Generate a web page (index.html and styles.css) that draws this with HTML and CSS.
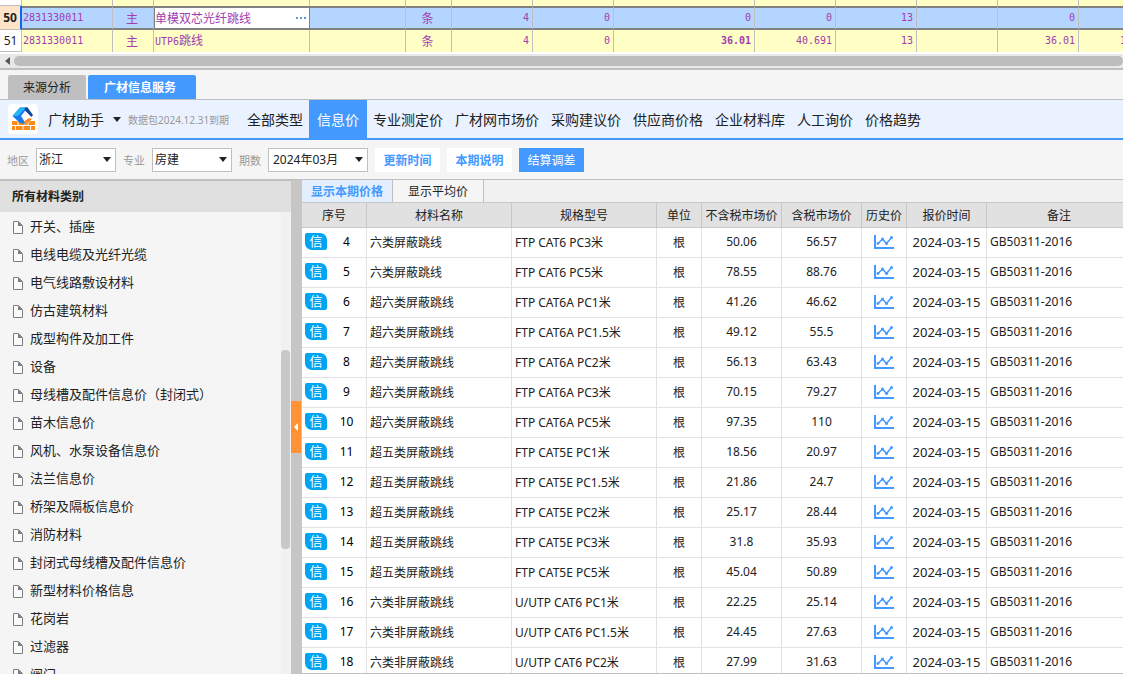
FILE: index.html
```
<!DOCTYPE html>
<html lang="zh-CN">
<head>
  <meta charset="UTF-8">
  <meta name="viewport" content="width=device-width, initial-scale=1.0">
  <title>广材助手 - 信息价</title>
  <link rel="stylesheet" href="styles.css">
</head>
<body>
  <svg class="symbols" aria-hidden="true">
    <symbol id="icon-file" viewBox="0 0 11 13">
      <path d="M1.500 .5h5L10.500 4.500v8h-9z" fill="#fafafa" stroke="#7d7d7d"/>
      <path d="M6 .5v4.500h4.500z" fill="#7d7d7d"/>
    </symbol>
    <symbol id="icon-trend" viewBox="0 0 20 14">
      <path d="M1 0v13h19" fill="none" stroke="#4499ff" stroke-width="2"/>
      <path d="M4 8.500l4.500-4.500 4 4.500 5-6" fill="none" stroke="#4499ff" stroke-width="1.500"/>
      <g fill="#4499ff"><circle cx="4" cy="8.500" r="1.400"/><circle cx="8.500" cy="4" r="1.500"/><circle cx="12.500" cy="8.500" r="1.500"/><circle cx="17.500" cy="2.500" r="1.500"/></g>
    </symbol>
  </svg>

  <section class="sheet">
    <table class="sheet-table">
      <colgroup>
        <col class="w22"><col class="w91"><col class="w41"><col class="w156"><col class="w96"><col class="w46">
        <col class="w81"><col class="w81"><col class="w141"><col class="w81"><col class="w81"><col class="w81"><col class="w81"><col class="w81">
      </colgroup>
      <tbody>
        <tr class="cut"><th></th><td></td><td></td><td></td><td></td><td></td><td></td><td></td><td></td><td></td><td></td><td></td><td></td><td></td></tr>
        <tr class="selected">
          <th>50</th><td class="left">2831330011</td><td class="cjk">主</td>
          <td class="cjk editing"><div><span>单模双芯光纤跳线</span><button aria-label="选择"><i></i><i></i><i></i></button></div></td>
          <td></td><td class="cjk">条</td><td>4</td><td>0</td><td>0</td><td>0</td><td>13</td><td></td><td>0</td><td></td>
        </tr>
        <tr>
          <th>51</th><td class="left">2831330011</td><td class="cjk">主</td>
          <td class="left">UTP6<span class="cjk">跳线</span></td>
          <td></td><td class="cjk">条</td><td>4</td><td>0</td><td><b>36.01</b></td><td>40.691</td><td>13</td><td></td><td>36.01</td><td>144.04</td>
        </tr>
      </tbody>
    </table>
    <div class="hscroll"><span class="hscroll-arrow"></span><span class="hscroll-thumb"></span></div>
  </section>

  <div class="panel-tabs">
    <button>来源分析</button>
    <button class="active">广材信息服务</button>
  </div>

  <header class="topnav">
    <svg class="logo" viewBox="0 0 30 30" aria-hidden="true">
      <rect width="30" height="30" rx="4" fill="#fff"/>
      <path d="M4 17h23v9H4z" fill="#ff8a1c"/>
      <path d="M4 21.500h23M10 17v4.500M20 17v4.500M7.500 21.500V26M15 21.500V26M22.500 21.500V26" stroke="#fff" fill="none"/>
      <path d="M10 12l7 9 9-7-8-6z" fill="#fff"/>
      <path d="M4.500 12L12 3.500h7.500L13 12l5 8-6-1z" fill="#1677ee"/>
      <path d="M4.500 12L12 3.500h6L10 12z" fill="#23b8f5"/>
      <path d="M17 3.500h2.500l5.500 7.500-1.500 2-7-7z" fill="#0b459e"/>
      <path d="M16 17.500l5-3.500 3 1-6.500 6z" fill="#ff8a1c"/>
    </svg>
    <button class="brand">广材助手<span class="caret"></span></button>
    <span class="expire">数据包2024.12.31到期</span>
    <nav>
      <a href="#">全部类型</a>
      <a href="#" class="active">信息价</a>
      <a href="#">专业测定价</a>
      <a href="#">广材网市场价</a>
      <a href="#">采购建议价</a>
      <a href="#">供应商价格</a>
      <a href="#">企业材料库</a>
      <a href="#">人工询价</a>
      <a href="#">价格趋势</a>
    </nav>
  </header>

  <div class="filters">
    <label for="area">地区</label>
    <div class="select"><select id="area"><option>浙江</option></select></div>
    <label for="major">专业</label>
    <div class="select"><select id="major"><option>房建</option></select></div>
    <label for="period">期数</label>
    <div class="select wide"><select id="period"><option>2024年03月</option></select></div>
    <button>更新时间</button>
    <button>本期说明</button>
    <button class="primary">结算调差</button>
  </div>

  <main class="workspace">
    <aside class="sidebar">
      <h2>所有材料类别</h2>
      <div class="tree">
        <ul id="categories"></ul>
        <div class="vscroll"><span></span></div>
      </div>
    </aside>
    <div class="splitter"><button aria-label="收起"></button></div>
    <section class="content">
      <div class="view-tabs">
        <button class="active">显示本期价格</button>
        <button>显示平均价</button>
      </div>
      <table class="prices">
        <colgroup>
          <col class="w65"><col class="w145"><col class="w145"><col class="w45"><col class="w80"><col class="w80"><col class="w45"><col class="w80"><col>
        </colgroup>
        <thead>
          <tr><th>序号</th><th>材料名称</th><th>规格型号</th><th>单位</th><th>不含税市场价</th><th>含税市场价</th><th>历史价</th><th>报价时间</th><th>备注</th></tr>
        </thead>
        <tbody id="rows"></tbody>
      </table>
    </section>
  </main>

  <script>
    const categories = [
      '开关、插座', '电线电缆及光纤光缆', '电气线路敷设材料', '仿古建筑材料', '成型构件及加工件', '设备',
      '母线槽及配件信息价（封闭式）', '苗木信息价', '风机、水泵设备信息价', '法兰信息价', '桥架及隔板信息价',
      '消防材料', '封闭式母线槽及配件信息价', '新型材料价格信息', '花岗岩', '过滤器', '阀门'
    ];

    // [序号, 材料名称, 规格型号, 不含税市场价, 含税市场价]
    const prices = [
      [4, '六类屏蔽跳线', 'FTP CAT6 PC3米', '50.06', '56.57'],
      [5, '六类屏蔽跳线', 'FTP CAT6 PC5米', '78.55', '88.76'],
      [6, '超六类屏蔽跳线', 'FTP CAT6A PC1米', '41.26', '46.62'],
      [7, '超六类屏蔽跳线', 'FTP CAT6A PC1.5米', '49.12', '55.5'],
      [8, '超六类屏蔽跳线', 'FTP CAT6A PC2米', '56.13', '63.43'],
      [9, '超六类屏蔽跳线', 'FTP CAT6A PC3米', '70.15', '79.27'],
      [10, '超六类屏蔽跳线', 'FTP CAT6A PC5米', '97.35', '110'],
      [11, '超五类屏蔽跳线', 'FTP CAT5E PC1米', '18.56', '20.97'],
      [12, '超五类屏蔽跳线', 'FTP CAT5E PC1.5米', '21.86', '24.7'],
      [13, '超五类屏蔽跳线', 'FTP CAT5E PC2米', '25.17', '28.44'],
      [14, '超五类屏蔽跳线', 'FTP CAT5E PC3米', '31.8', '35.93'],
      [15, '超五类屏蔽跳线', 'FTP CAT5E PC5米', '45.04', '50.89'],
      [16, '六类非屏蔽跳线', 'U/UTP CAT6 PC1米', '22.25', '25.14'],
      [17, '六类非屏蔽跳线', 'U/UTP CAT6 PC1.5米', '24.45', '27.63'],
      [18, '六类非屏蔽跳线', 'U/UTP CAT6 PC2米', '27.99', '31.63']
    ];

    document.getElementById('categories').innerHTML = categories.map(name =>
      `<li><svg><use href="#icon-file"/></svg>${name}</li>`
    ).join('');

    document.getElementById('rows').innerHTML = prices.map(([no, name, spec, net, gross]) => `
      <tr>
        <td><div class="no"><span class="tag">信</span><span>${no}</span></div></td>
        <td class="left">${name}</td>
        <td class="left">${spec}</td>
        <td>根</td>
        <td>${net}</td>
        <td>${gross}</td>
        <td><svg class="trend"><use href="#icon-trend"/></svg></td>
        <td class="date">2024-03-15</td>
        <td class="left">GB50311-2016</td>
      </tr>`
    ).join('');
  </script>
</body>
</html>
```
FILE: styles.css
```
* {
  box-sizing: border-box;
}
body {
  margin: 0;
  height: 100vh;
  padding-bottom: 12px;
  display: flex;
  flex-direction: column;
  overflow: hidden;
  background: #fff;
  color: #222;
  font-family: "Noto Sans", "Noto Sans CJK SC", sans-serif;
  font-size: 12px;
}
button, select {
  font: inherit;
  color: inherit;
  border: 0;
  border-radius: 0;
  padding: 0;
  background: none;
}
a {
  color: inherit;
  text-decoration: none;
}
table {
  border-collapse: separate;
  border-spacing: 0;
  table-layout: fixed;
}
.symbols {
  display: none;
}
.w22 { width: 22px; }
.w41 { width: 41px; }
.w45 { width: 45px; }
.w46 { width: 46px; }
.w65 { width: 65px; }
.w80 { width: 80px; }
.w81 { width: 81px; }
.w91 { width: 91px; }
.w96 { width: 96px; }
.w141 { width: 141px; }
.w145 { width: 145px; }
.w156 { width: 156px; }

/* 上方清单 */
.sheet {
  flex: none;
  overflow: hidden;
  border-bottom: 2px solid #bfbfbf;
}
.sheet-table {
  width: 1160px;
  margin-bottom: 2px;
}
.sheet-table td, .sheet-table th {
  height: 22px;
  padding: 0 3px 1px 1px;
  line-height: 18px;
  border-right: 1px solid #bfbfbf;
  white-space: nowrap;
}
.sheet-table td {
  background: #ffffc5;
  color: #a33cae;
  font-family: "DejaVu Sans Mono", monospace;
  font-size: 10px;
  text-align: right;
}
.sheet-table th {
  padding: 0;
  font-weight: normal;
  background: #fff;
  border-bottom: 1px solid #bfbfbf;
}
.sheet-table .left {
  text-align: left;
}
.sheet-table .cjk {
  font-family: "Noto Sans CJK SC", sans-serif;
  font-size: 12px;
  text-align: center;
}
.sheet-table .cut td, .sheet-table .cut th {
  height: 6px;
  padding: 0;
}
.sheet-table .selected td {
  height: 24px;
  padding-bottom: 1px;
  background: #b3d5ff;
  border-top: 2px solid #808080;
  border-bottom: 2px solid #808080;
}
.sheet-table .selected th {
  background: #ffe4c8;
  border-right: 2px solid #1166ee;
  font-weight: bold;
}
.sheet-table .selected .editing {
  background: #fff;
  border-right-color: #808080;
  box-shadow: inset 1px 0 #808080;
}
.editing div {
  display: flex;
  justify-content: space-between;
}
.editing button {
  display: flex;
  align-items: center;
  gap: 2px;
}
.editing i {
  width: 2px;
  height: 2px;
  background: #5b9bd0;
}
.hscroll {
  display: flex;
  align-items: center;
  gap: 4px;
  height: 14px;
  padding-left: 5px;
  background: #e8e8e8;
}
.hscroll-arrow {
  border: 4px solid transparent;
  border-left: 0;
  border-right: 5px solid #555;
}
.hscroll-thumb {
  flex: 1;
  height: 10px;
  border-radius: 5px;
  background: #bdbdbd;
}

/* 面板页签 */
.panel-tabs {
  flex: none;
  display: flex;
  align-items: flex-end;
  gap: 2px;
  height: 30px;
  padding-left: 8px;
  background: #f5f5f5;
  border-bottom: 1px solid #bfbfbf;
}
.panel-tabs button {
  width: 78px;
  height: 24px;
  border-radius: 2px 2px 0 0;
  background: #bfbfbf;
}
.panel-tabs .active {
  width: 108px;
  padding-right: 4px;
  background: #4499ff;
  color: #fff;
  font-weight: bold;
}

.topnav {
  flex: none;
  display: flex;
  align-items: center;
  height: 40px;
  padding-left: 8px;
  background: #eaf1ff;
  border-bottom: 2px solid #4499ff;
}
.logo {
  width: 30px;
  height: 30px;
}
.brand {
  display: flex;
  align-items: center;
  gap: 9px;
  margin: 0 7px 0 10px;
  font-size: 14px;
}
.caret {
  border: 4px solid transparent;
  border-top: 5px solid #222;
  border-bottom: 0;
}
.expire {
  width: 113px;
  font-size: 10px;
  color: #999;
  white-space: nowrap;
}
.topnav nav {
  display: flex;
  align-self: stretch;
  font-size: 14px;
  line-height: 40px;
}
.topnav nav a {
  padding: 0 6px;
  white-space: nowrap;
}
.topnav nav .active {
  padding: 0 8px;
  background: #4499ff;
  color: #fff;
}

/* 筛选栏 */
.filters {
  flex: none;
  display: flex;
  align-items: center;
  gap: 7px;
  height: 40px;
  padding-left: 7px;
  background: #f5f5f5;
  border-bottom: 1px solid #bfbfbf;
}
.filters label {
  width: 22px;
  font-size: 11px;
  color: #999;
}
.select {
  position: relative;
  width: 80px;
}
.select.wide {
  width: 100px;
}
.select::after {
  content: "";
  position: absolute;
  top: 9px;
  right: 5px;
  border: 4px solid transparent;
  border-top: 5px solid #222;
  border-bottom: 0;
  pointer-events: none;
}
.select select {
  display: block;
  width: 100%;
  height: 24px;
  padding-left: 2px;
  border: 1px solid #bfbfbf;
  background: #fff;
  appearance: none;
}
.select.wide select {
  padding-left: 4px;
}
.filters button {
  width: 65px;
  height: 24px;
  background: #fff;
  color: #4499ff;
  font-weight: bold;
}
.filters .primary {
  background: #4499ff;
  color: #fff;
  font-weight: normal;
}

.workspace {
  flex: 1;
  min-height: 0;
  display: flex;
}
.sidebar {
  flex: none;
  width: 291px;
  display: flex;
  flex-direction: column;
  background: #f5f5f5;
}
.sidebar h2 {
  flex: none;
  margin: 0;
  padding-left: 12px;
  font-size: 12px;
  line-height: 31px;
  background: #e0e0e0;
  border-top: 1px solid #bfbfbf;
}
.tree {
  flex: 1;
  min-height: 0;
  display: flex;
}
.tree ul {
  flex: 1;
  margin: 0;
  padding: 0 0 0 12px;
  list-style: none;
  overflow: hidden;
  font-size: 13px;
}
.tree li {
  display: flex;
  align-items: center;
  gap: 7px;
  height: 28px;
  line-height: 28px;
}
.tree svg {
  width: 11px;
  height: 13px;
  margin-top: 3px;
}
.vscroll {
  width: 10px;
  padding-top: 138px;
  background: #f1f1f1;
}
.vscroll span {
  display: block;
  width: 9px;
  height: 199px;
  border-radius: 4px;
  background: #c8c8c8;
}
.splitter {
  flex: none;
  width: 11px;
  display: flex;
  align-items: center;
  background: #c8c6c4;
}
.splitter button {
  width: 10px;
  height: 52px;
  padding-left: 3px;
  background: #ff9333;
}
.splitter button::before {
  content: "";
  display: block;
  width: 0;
  border: 4px solid transparent;
  border-left: 0;
  border-right-color: #fff;
}

/* 价格表 */
.content {
  flex: 1;
  min-width: 0;
  overflow: hidden;
  border-bottom: 1px solid #bfbfbf;
}
.view-tabs {
  display: flex;
  height: 23px;
  background: #f1f1f1;
  border-bottom: 1px solid #c8c8c8;
}
.view-tabs button {
  width: 91px;
  background: #f5f5f5;
  border-right: 1px solid #bfbfbf;
}
.view-tabs .active {
  background: #e3efff;
  color: #4499ff;
  font-weight: bold;
}
.prices {
  width: 100%;
  background: #fff;
}
.prices th {
  height: 25px;
  padding: 0;
  font-weight: normal;
  background: #e1e1e1;
  border-right: 1px solid #c8c8c8;
  border-bottom: 1px solid #c8c8c8;
  white-space: nowrap;
}
.prices td {
  height: 30px;
  padding: 0 0 2px;
  text-align: center;
  border-right: 1px solid #e2e2e2;
  border-bottom: 1px solid #e2e2e2;
  white-space: nowrap;
}
.prices .left {
  padding-left: 3px;
  text-align: left;
}
.prices .date {
  font-size: 13px;
}
.prices th:last-child, .prices td:last-child {
  border-right: 0;
}
.prices th:last-child {
  padding-left: 8px;
}
.no {
  display: flex;
  align-items: center;
  padding-left: 3px;
}
.no span:last-child {
  width: 39px;
  color: #000;
}
.tag {
  width: 22px;
  height: 17px;
  border-radius: 2px 7px 2px 7px;
  background: #00a4f0;
  color: #fff;
  font-size: 13px;
  line-height: 17px;
}
.trend {
  display: block;
  width: 20px;
  height: 14px;
  margin: 0 auto;
}
```
